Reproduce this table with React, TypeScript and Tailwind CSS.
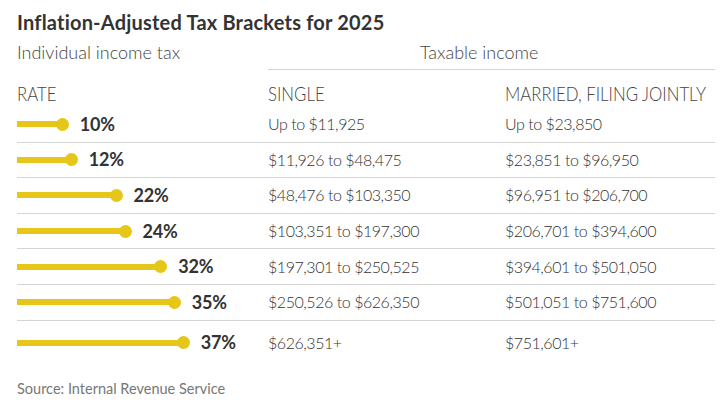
const rows = [
  { rate: 10, single: "Up to $11,925", married: "Up to $23,850" },
  { rate: 12, single: "$11,926 to $48,475", married: "$23,851 to $96,950" },
  { rate: 22, single: "$48,476 to $103,350", married: "$96,951 to $206,700" },
  { rate: 24, single: "$103,351 to $197,300", married: "$206,701 to $394,600" },
  { rate: 32, single: "$197,301 to $250,525", married: "$394,601 to $501,050" },
  { rate: 35, single: "$250,526 to $626,350", married: "$501,051 to $751,600" },
  { rate: 37, single: "$626,351+", married: "$751,601+" },
];

function RateBar({ rate }: { rate: number }) {
  return (
    <div className="flex items-center">
      <div className="h-[6px] bg-[#e6c619]" style={{ width: rate * 4.48 }} />
      <div className="-ml-[6px] h-[13px] w-[13px] rounded-full bg-[#e6c619]" />
      <span className="ml-[11px] text-[18px] font-bold tracking-[-0.2px] text-[#333]">{rate}%</span>
    </div>
  );
}

export default function App() {
  return (
    <div className="h-[407px] w-[726px] overflow-hidden bg-white px-[17px] pt-[10px] font-['Lato',sans-serif] text-[#444]">
      <h1 className="text-[20px] font-bold leading-[24px] tracking-[0.2px] text-[#333]">
        Inflation-Adjusted Tax Brackets for 2025
      </h1>

      <div className="mt-[7px] grid w-[698px] grid-cols-[251px_1fr] text-[18px] font-light leading-[22px] text-[#444]">
        <div>Individual income tax</div>
        <div className="border-b border-[#d5d5d5] pb-[6px] pl-[152px]">Taxable income</div>
      </div>

      <div className="grid h-[37px] w-[698px] grid-cols-[251px_237px_1fr] pt-[12px] text-[20px] font-light uppercase leading-[22px] text-[#444]">
        <span className="inline-block origin-left scale-x-[0.84] whitespace-nowrap">Rate</span>
        <span className="inline-block origin-left scale-x-[0.84] whitespace-nowrap">Single</span>
        <span className="inline-block origin-left scale-x-[0.84] whitespace-nowrap">Married, filing jointly</span>
      </div>

      <div className="w-[698px]">
        {rows.map((r, i) => (
          <div
            key={r.rate}
            className={
              i === rows.length - 1
                ? "grid h-[44px] grid-cols-[251px_237px_1fr] items-center text-[16px] font-light tracking-[-0.45px] text-[#333]"
                : "grid h-[35.6px] grid-cols-[251px_237px_1fr] items-center border-b border-[#d5d5d5] text-[16px] font-light tracking-[-0.45px] text-[#333]"
            }
          >
            <RateBar rate={r.rate} />
            <div>{r.single}</div>
            <div>{r.married}</div>
          </div>
        ))}
      </div>

      <div className="mt-[14px] text-[14.5px] leading-[20px] text-[#777]">Source: Internal Revenue Service</div>
    </div>
  );
}
